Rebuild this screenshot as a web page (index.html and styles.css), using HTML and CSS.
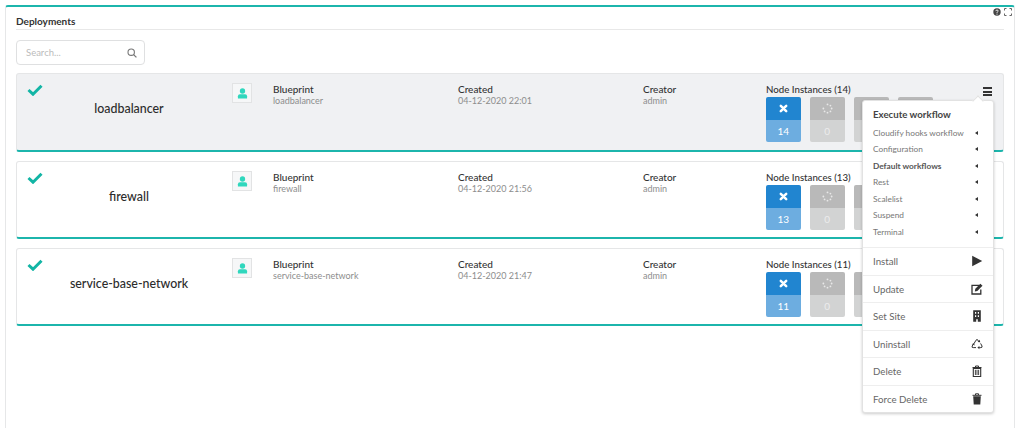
FILE: index.html
```html
<!DOCTYPE html>
<html lang="en">
<head>
<meta charset="utf-8">
<title>Deployments</title>
<link rel="stylesheet" href="styles.css">
</head>
<body>
<svg class="defs" width="0" height="0">
  <defs>
    <symbol id="i-check" viewBox="0 0 16 12"><path d="M1.5 6 L6 10.2 L14.5 1.8" fill="none" stroke="currentColor" stroke-width="3"/></symbol>
    <symbol id="i-user" viewBox="0 0 12 12"><circle cx="6" cy="3.3" r="2.9" fill="currentColor"/><path d="M1 11.5 V9 Q1 6.8 3.2 6.8 H8.8 Q11 6.8 11 9 V11.5 Z" fill="currentColor"/></symbol>
    <symbol id="i-x" viewBox="0 0 10 10"><path d="M2 2 L8 8 M8 2 L2 8" stroke="currentColor" stroke-width="2.8" fill="none" stroke-linecap="round"/></symbol>
    <symbol id="i-spin" viewBox="0 0 12 12"><g fill="currentColor"><circle cx="6" cy="1.5" r="1"/><circle cx="9.2" cy="2.8" r="1"/><circle cx="10.5" cy="6" r="1"/><circle cx="9.2" cy="9.2" r="1"/><circle cx="6" cy="10.5" r="1"/><circle cx="2.8" cy="9.2" r="1"/><circle cx="1.5" cy="6" r="1"/></g></symbol>
  </defs>
</svg>
<main class="widget">
  <div class="widget-tools">
    <svg class="tool" viewBox="0 0 8 8"><circle cx="4" cy="4" r="3.7" fill="#444"/><path d="M2.8 3.1 Q2.9 2 4 2 Q5.2 2 5.2 3 Q5.2 3.6 4.4 4 Q4 4.3 4 4.8" stroke="#fff" fill="none" stroke-width=".9"/><circle cx="4" cy="6.1" r=".55" fill="#fff"/></svg>
    <svg class="tool" viewBox="0 0 8 8"><path d="M.5 2.5 V.5 H2.5 M5.5 .5 H7.5 V2.5 M7.5 5.5 V7.5 H5.5 M2.5 7.5 H.5 V5.5" fill="none" stroke="#555" stroke-width=".9"/></svg>
  </div>
  <h1 class="widget-title">Deployments</h1>
  <div class="search">
    <span class="search-text">Search...</span>
    <svg class="search-icon" viewBox="0 0 10 10"><circle cx="4.2" cy="4.2" r="3.2" fill="none" stroke="#777" stroke-width="1.1"/><path d="M6.6 6.6 L9.4 9.4" stroke="#777" stroke-width="1.3"/></svg>
  </div>

  <section class="card card-active">
    <svg class="check"><use href="#i-check"/></svg>
    <div class="name">loadbalancer</div>
    <div class="avatar"><svg><use href="#i-user"/></svg></div>
    <div class="field"><b>Blueprint</b><span>loadbalancer</span></div>
    <div class="field"><b>Created</b><span>04-12-2020 22:01</span></div>
    <div class="field"><b>Creator</b><span>admin</span></div>
    <div class="nodes">
      <b>Node Instances (14)</b>
      <div class="stats">
        <div class="stat stat-blue"><i><svg><use href="#i-x"/></svg></i><em>14</em></div>
        <div class="stat"><i><svg class="spin"><use href="#i-spin"/></svg></i><em>0</em></div>
        <div class="stat"><i></i><em>0</em></div>
        <div class="stat"><i></i><em>0</em></div>
      </div>
    </div>
    <div class="burger"><span></span><span></span><span></span></div>
  </section>

  <section class="card">
    <svg class="check"><use href="#i-check"/></svg>
    <div class="name">firewall</div>
    <div class="avatar"><svg><use href="#i-user"/></svg></div>
    <div class="field"><b>Blueprint</b><span>firewall</span></div>
    <div class="field"><b>Created</b><span>04-12-2020 21:56</span></div>
    <div class="field"><b>Creator</b><span>admin</span></div>
    <div class="nodes">
      <b>Node Instances (13)</b>
      <div class="stats">
        <div class="stat stat-blue"><i><svg><use href="#i-x"/></svg></i><em>13</em></div>
        <div class="stat"><i><svg class="spin"><use href="#i-spin"/></svg></i><em>0</em></div>
        <div class="stat"><i></i><em>0</em></div>
        <div class="stat"><i></i><em>0</em></div>
      </div>
    </div>
  </section>

  <section class="card">
    <svg class="check"><use href="#i-check"/></svg>
    <div class="name">service-base-network</div>
    <div class="avatar"><svg><use href="#i-user"/></svg></div>
    <div class="field"><b>Blueprint</b><span>service-base-network</span></div>
    <div class="field"><b>Created</b><span>04-12-2020 21:47</span></div>
    <div class="field"><b>Creator</b><span>admin</span></div>
    <div class="nodes">
      <b>Node Instances (11)</b>
      <div class="stats">
        <div class="stat stat-blue"><i><svg><use href="#i-x"/></svg></i><em>11</em></div>
        <div class="stat"><i><svg class="spin"><use href="#i-spin"/></svg></i><em>0</em></div>
        <div class="stat"><i></i><em>0</em></div>
        <div class="stat"><i></i><em>0</em></div>
      </div>
    </div>
  </section>

  <nav class="menu">
    <div class="menu-head">Execute workflow</div>
    <ul class="submenu">
      <li>Cloudify hooks workflow<i></i></li>
      <li>Configuration<i></i></li>
      <li class="strong">Default workflows<i></i></li>
      <li>Rest<i></i></li>
      <li>Scalelist<i></i></li>
      <li>Suspend<i></i></li>
      <li>Terminal<i></i></li>
    </ul>
    <div class="action">Install
      <svg viewBox="0 0 12 12"><path d="M1.2 .8 L11.2 6 L1.2 11.2 Z" fill="#333"/></svg></div>
    <div class="action">Update
      <svg viewBox="0 0 12 12"><path d="M8.6 2.4 H1 V11 H9.8 V6.4" fill="none" stroke="#333" stroke-width="1.3"/><path d="M3.8 8.4 L4.3 5.8 L9.4 .8 L11.5 2.7 L6.3 7.9 Z" fill="#333"/></svg></div>
    <div class="action">Set Site
      <svg viewBox="0 0 12 12"><path d="M2.2 .3 H9.8 V11.7 H6.8 V9.2 H5.2 V11.7 H2.2 Z" fill="#333"/><path d="M4 2 H5.2 V3.8 H4 Z M6.8 2 H8 V3.8 H6.8 Z M4 5.2 H5.2 V7 H4 Z M6.8 5.2 H8 V7 H6.8 Z" fill="#fff"/></svg></div>
    <div class="action">Uninstall
      <svg viewBox="0 0 12 12"><path d="M3 5.6 L5 2.2 Q6 .8 7 2.2 L7.7 3.4 M9.6 5.4 L11 8 Q11.6 9.6 9.8 9.6 H8.2 M5 9.6 H2.2 Q.4 9.6 1.2 8 L1.9 6.8" fill="none" stroke="#333" stroke-width="1"/><path d="M6.6 4 L9.3 4.2 L8.6 1.8 Z M8.4 8 L6.4 9.6 L8.4 11.2 Z M.7 6.3 L3.2 5 L3.6 7.6 Z" fill="#333"/></svg></div>
    <div class="action">Delete
      <svg viewBox="0 0 12 12"><path d="M1.5 2.5 H10.5 M4.5 2.3 V1 H7.5 V2.3" fill="none" stroke="#333" stroke-width="1"/><path d="M2.3 3.5 H9.7 V11.5 H2.3 Z" fill="none" stroke="#333" stroke-width="1.1"/><path d="M4.4 4.8 V10 M6 4.8 V10 M7.6 4.8 V10" stroke="#333" stroke-width=".9"/></svg></div>
    <div class="action">Force Delete
      <svg viewBox="0 0 12 12"><path d="M1.5 2.3 H10.5 M4.5 2 V.8 H7.5 V2" fill="none" stroke="#333" stroke-width="1"/><path d="M2.2 3.3 H9.8 L9.3 11.6 H2.7 Z" fill="#333"/></svg></div>
  </nav>
</main>
</body>
</html>
```
FILE: styles.css
```css
* { box-sizing: border-box; }
html, body { height: 100%; }
body {
  margin: 0;
  padding: 5px 9px 0 5px;
  background: #fff;
  font-family: Lato, "Open Sans", sans-serif;
  color: #333;
  overflow: hidden;
}
.defs { position: absolute; }
.widget {
  position: relative;
  height: 423px;
  padding: 10px 10px 0 10px;
  border: 1px solid #e6e7e8;
  border-bottom: 0;
  border-top: 2px solid #1cb5ac;
  border-radius: 3px 3px 0 0;
}
.widget-tools {
  position: absolute;
  top: 1px;
  right: 2px;
  display: flex;
  gap: 3px;
}
.tool { width: 8px; height: 8px; display: block; }
.widget-title {
  margin: 0 0 10px;
  height: 12px;
  box-sizing: content-box;
  font-size: 10px;
  line-height: 8px;
  font-weight: 700;
  color: #333;
  border-bottom: 1px solid #e8e8e8;
}
.search {
  width: 129px;
  height: 25px;
  margin-bottom: 8px;
  padding: 0 7px 0 9px;
  display: flex;
  align-items: center;
  justify-content: space-between;
  border: 1px solid #dfe0e1;
  border-radius: 4px;
  font-size: 9.5px;
  color: #bbb;
}
.search-icon { width: 10px; height: 10px; }
.card {
  display: grid;
  grid-template-columns: 32px 160px 64px 185px 185px 123.5px 214px 1fr;
  height: 79px;
  margin-bottom: 9px;
  padding: 9px 0 0 0;
  background: #fff;
  border: 1px solid #e5e6e7;
  border-bottom: 2px solid #1cb5ac;
  border-radius: 3px;
}
.card-active { background: #f0f1f3; }
.card + .card { height: 78px; }
.check { width: 16px; height: 12px; margin: 1px 0 0 10px; color: #12b5a5; }
.name {
  font-size: 12.4px;
  line-height: 15px;
  font-weight: 500;
  margin-top: 18px;
  text-align: center;
  color: #2c2c2c;
}
.avatar {
  width: 20px;
  height: 20px;
  margin-left: 23px;
  display: flex;
  align-items: center;
  justify-content: center;
  border: 1px solid #e2e3e4;
  background: #f6f7f8;
  color: #2fd7bd;
}
.avatar svg { width: 11px; height: 11px; }
.field { display: flex; flex-direction: column; font-size: 9px; line-height: 11px; margin-top: 1px; }
.field b, .nodes b { font-weight: 500; font-size: 10px; color: #333; line-height: 11px; }
.nodes b { font-size: 9.7px; }
.field span { color: #8d8d8d; }
.nodes { display: flex; flex-direction: column; gap: 2px; margin-top: 1px; margin-left: -0.5px; }
.stats { display: flex; gap: 9.5px; }
.stat {
  width: 34.5px;
  height: 45px;
  border-radius: 2px;
  overflow: hidden;
  display: flex;
  flex-direction: column;
}
.stat i {
  height: 23px;
  background: #b9b9b9;
  color: #e8e8e8;
  display: flex;
  align-items: center;
  justify-content: center;
}
.stat em {
  height: 22px;
  background: #d2d3d3;
  font-style: normal;
  color: #ececec;
  font-size: 10px;
  display: flex;
  align-items: center;
  justify-content: center;
}
.stat-blue i { background: #2185d0; color: #fff; }
.stat-blue em { background: #6dade0; color: #fff; }
.stat svg { width: 9px; height: 9px; }
.stat svg.spin { width: 11px; height: 11px; }
.burger {
  display: flex;
  flex-direction: column;
  gap: 1.5px;
  width: 9px;
  margin-top: 4px;
  margin-left: 2px;
}
.burger span { height: 2px; background: #333; }
.menu {
  position: absolute;
  left: 856px;
  top: 93px;
  width: 132px;
  background: #fff;
  border: 1px solid #e2e2e2;
  border-radius: 3px;
  box-shadow: 0 1px 3px rgba(0,0,0,.2);
  font-size: 9.7px;
  color: #666;
}
.menu::before {
  content: "";
  position: absolute;
  top: -4px;
  right: 11px;
  width: 7px;
  height: 7px;
  background: #fff;
  border-left: 1px solid #e2e2e2;
  border-top: 1px solid #e2e2e2;
  transform: rotate(45deg);
}
.menu-head {
  padding: 7px 10px 0;
  height: 22px;
  font-size: 9.7px;
  line-height: 12px;
  font-weight: 700;
  color: #444;
}
.submenu {
  list-style: none;
  margin: 0;
  padding: 2px 10px 7px;
  font-size: 8.3px;
}
.submenu li {
  height: 16.45px;
  line-height: 16px;
  position: relative;
  color: #777;
}
.submenu li.strong { font-weight: 700; color: #555; }
.submenu i {
  position: absolute;
  right: 5px;
  top: 6px;
  border: 2.5px solid transparent;
  border-left: 0;
  border-right: 3px solid #333;
}
.action {
  height: 27.5px;
  padding: 0 10px;
  display: flex;
  align-items: center;
  justify-content: space-between;
  border-top: 1px solid #eee;
}
.action svg { width: 12px; height: 12px; }
```
